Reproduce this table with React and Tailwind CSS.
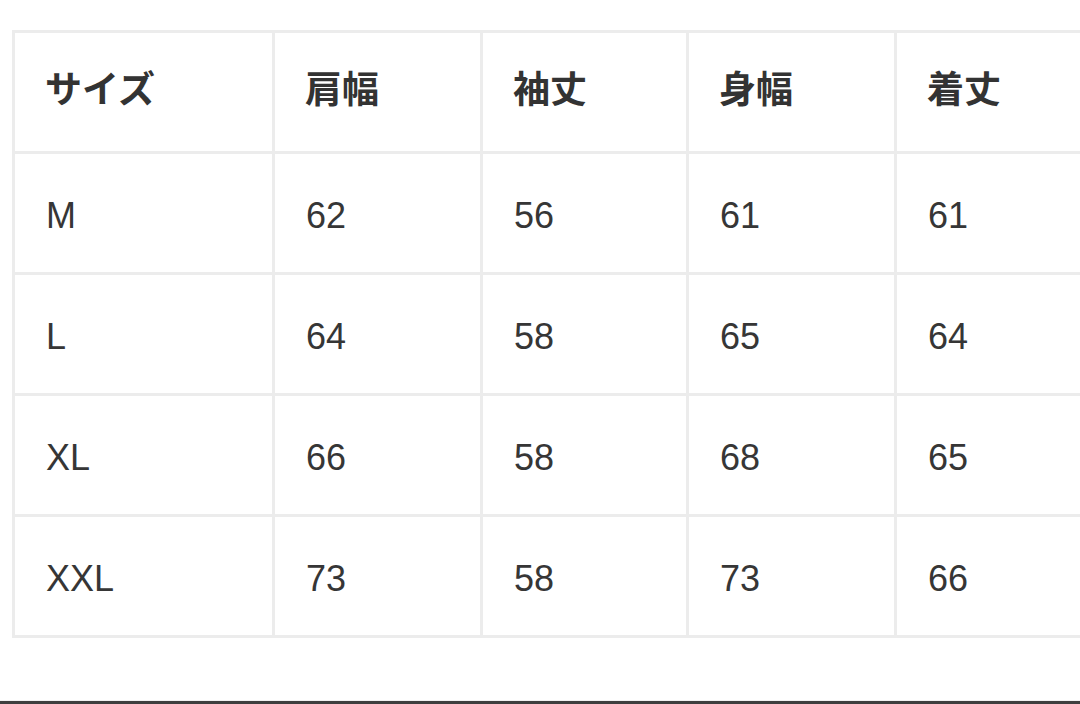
const headers = ['サイズ', '肩幅', '袖丈', '身幅', '着丈']

const rows = [
  ['M', '62', '56', '61', '61'],
  ['L', '64', '58', '65', '64'],
  ['XL', '66', '58', '68', '65'],
  ['XXL', '73', '58', '73', '66'],
]

export default function App() {
  return (
    <div
      className="relative w-[1080px] h-[704px] overflow-hidden bg-white"
      style={{ fontFamily: '"Liberation Sans", "Noto Sans CJK JP", sans-serif' }}
    >
      <div className="pt-[30px] pl-[12px]">
        <div className="grid w-[1100px] grid-cols-[257px_205px_203px_205px_203px] auto-rows-[118px] gap-[3px] border-[3px] border-r-0 border-[#ececec] bg-[#ececec]">
          {headers.map((h) => (
            <div
              key={h}
              className="flex items-center bg-white pl-[30px] pb-[2px] text-[37px] font-bold text-[#333333]"
            >
              {h}
            </div>
          ))}
          {rows.map((row) =>
            row.map((cell, i) => (
              <div
                key={row[0] + i}
                className="flex items-center bg-white pl-[31px] pt-[5px] text-[36px] text-[#363636]"
              >
                {cell}
              </div>
            ))
          )}
        </div>
      </div>
      <div className="absolute bottom-0 left-0 w-full">
        <div className="h-[1px] bg-[#f1f1f1]" />
        <div className="h-[3px] bg-[#3e3e3e]" />
      </div>
    </div>
  )
}
